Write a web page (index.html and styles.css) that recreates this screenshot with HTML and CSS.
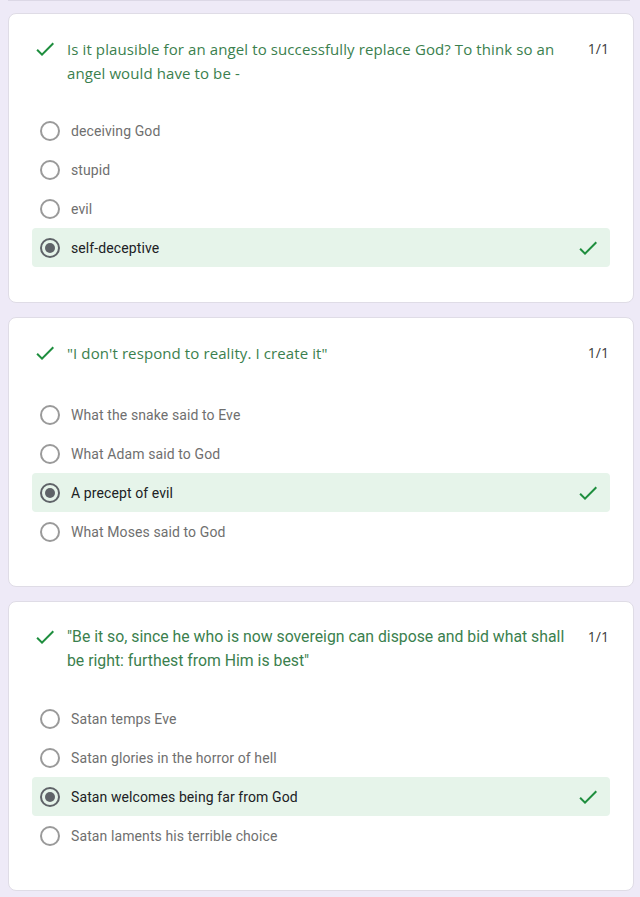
FILE: index.html
```html
<!DOCTYPE html>
<html lang="en">
<head>
<meta charset="utf-8">
<title>Quiz results</title>
<link rel="stylesheet" href="styles.css">
</head>
<body>
<div class="page">
  <div class="prev-edge"></div>

  <section class="card">
    <div class="q-head">
      <svg class="q-check" viewBox="0 0 24 24"><path d="M9 16.2L4.8 12l-1.4 1.4L9 19 21 7l-1.4-1.4L9 16.2z"/></svg>
      <div class="q-title">Is it plausible for an angel to successfully replace God? To think so an angel would have to be -</div>
      <div class="q-points">1/1</div>
    </div>
    <div class="options">
      <div class="opt"><span class="radio"></span><span class="opt-text">deceiving God</span></div>
      <div class="opt"><span class="radio"></span><span class="opt-text">stupid</span></div>
      <div class="opt"><span class="radio"></span><span class="opt-text">evil</span></div>
      <div class="opt opt-correct"><span class="radio radio-on"></span><span class="opt-text">self-deceptive</span>
        <svg class="opt-check" viewBox="0 0 24 24"><path d="M9 16.2L4.8 12l-1.4 1.4L9 19 21 7l-1.4-1.4L9 16.2z"/></svg></div>
    </div>
  </section>

  <section class="card">
    <div class="q-head q-head-single">
      <svg class="q-check" viewBox="0 0 24 24"><path d="M9 16.2L4.8 12l-1.4 1.4L9 19 21 7l-1.4-1.4L9 16.2z"/></svg>
      <div class="q-title">"I don't respond to reality. I create it"</div>
      <div class="q-points">1/1</div>
    </div>
    <div class="options">
      <div class="opt"><span class="radio"></span><span class="opt-text">What the snake said to Eve</span></div>
      <div class="opt"><span class="radio"></span><span class="opt-text">What Adam said to God</span></div>
      <div class="opt opt-correct"><span class="radio radio-on"></span><span class="opt-text">A precept of evil</span>
        <svg class="opt-check" viewBox="0 0 24 24"><path d="M9 16.2L4.8 12l-1.4 1.4L9 19 21 7l-1.4-1.4L9 16.2z"/></svg></div>
      <div class="opt"><span class="radio"></span><span class="opt-text">What Moses said to God</span></div>
    </div>
  </section>

  <section class="card">
    <div class="q-head">
      <svg class="q-check" viewBox="0 0 24 24"><path d="M9 16.2L4.8 12l-1.4 1.4L9 19 21 7l-1.4-1.4L9 16.2z"/></svg>
      <div class="q-title q-title-narrow">"Be it so, since he who is now sovereign can dispose and bid what shall be right: furthest from Him is best"</div>
      <div class="q-points">1/1</div>
    </div>
    <div class="options">
      <div class="opt"><span class="radio"></span><span class="opt-text">Satan temps Eve</span></div>
      <div class="opt"><span class="radio"></span><span class="opt-text">Satan glories in the horror of hell</span></div>
      <div class="opt opt-correct"><span class="radio radio-on"></span><span class="opt-text">Satan welcomes being far from God</span>
        <svg class="opt-check" viewBox="0 0 24 24"><path d="M9 16.2L4.8 12l-1.4 1.4L9 19 21 7l-1.4-1.4L9 16.2z"/></svg></div>
      <div class="opt"><span class="radio"></span><span class="opt-text">Satan laments his terrible choice</span></div>
    </div>
  </section>
</div>
</body>
</html>
```

FILE: styles.css
```css
html, body {
  margin: 0;
  padding: 0;
  background: #eeeaf7;
}
body {
  font-family: Roboto, "Liberation Sans", Arial, sans-serif;
}
.page {
  display: flex;
  flex-direction: column;
  gap: 14px;
  padding: 0 6px 20px 8px;
}
.prev-edge {
  height: 1px;
  background: #dcd8e6;
  margin-right: 4px;
  margin-bottom: -2px;
}
.card {
  background: #fff;
  border: 1px solid #dfdce6;
  border-radius: 8px;
  padding: 23px 23px 35px 23px;
}
.q-head {
  display: flex;
  align-items: flex-start;
  margin-bottom: 26px;
  padding-left: 1px;
}
.q-head-single {
  min-height: 28px;
}
.q-check {
  width: 24px;
  height: 24px;
  flex: none;
  fill: #1e8e3e;
}
.q-title {
  flex: 1;
  margin-left: 10px;
  margin-right: 20px;
  font-family: "Open Sans", "Liberation Sans", sans-serif;
  font-size: 15px;
  letter-spacing: 0.1px;
  line-height: 24px;
  color: #3b7f4e;
}
.q-title-narrow {
  font-family: Roboto, "Liberation Sans", sans-serif;
  font-size: 15.8px;
  letter-spacing: 0;
}
.q-points {
  flex: none;
  font-family: "Open Sans", "Liberation Sans", sans-serif;
  font-size: 14px;
  line-height: 24px;
  color: #3c3c3c;
  margin-right: 1px;
}
.options {
  display: flex;
  flex-direction: column;
}
.opt {
  display: flex;
  align-items: center;
  height: 39px;
  padding: 0 10px 0 8px;
  border-radius: 4px;
}
.opt-correct {
  background: #e6f4ea;
}
.radio {
  width: 20px;
  height: 20px;
  box-sizing: border-box;
  border: 2px solid #9a9a9a;
  border-radius: 50%;
  flex: none;
  display: flex;
  align-items: center;
  justify-content: center;
}
.radio-on {
  border-color: #5f6368;
}
.radio-on::after {
  content: "";
  width: 10px;
  height: 10px;
  border-radius: 50%;
  background: #5f6368;
}
.opt-text {
  flex: 1;
  margin-left: 11px;
  font-size: 14px;
  color: #6f6f6f;
  letter-spacing: 0.1px;
}
.opt-correct .opt-text {
  color: #202124;
}
.opt-check {
  width: 24px;
  height: 24px;
  flex: none;
  fill: #1e8e3e;
}
```
